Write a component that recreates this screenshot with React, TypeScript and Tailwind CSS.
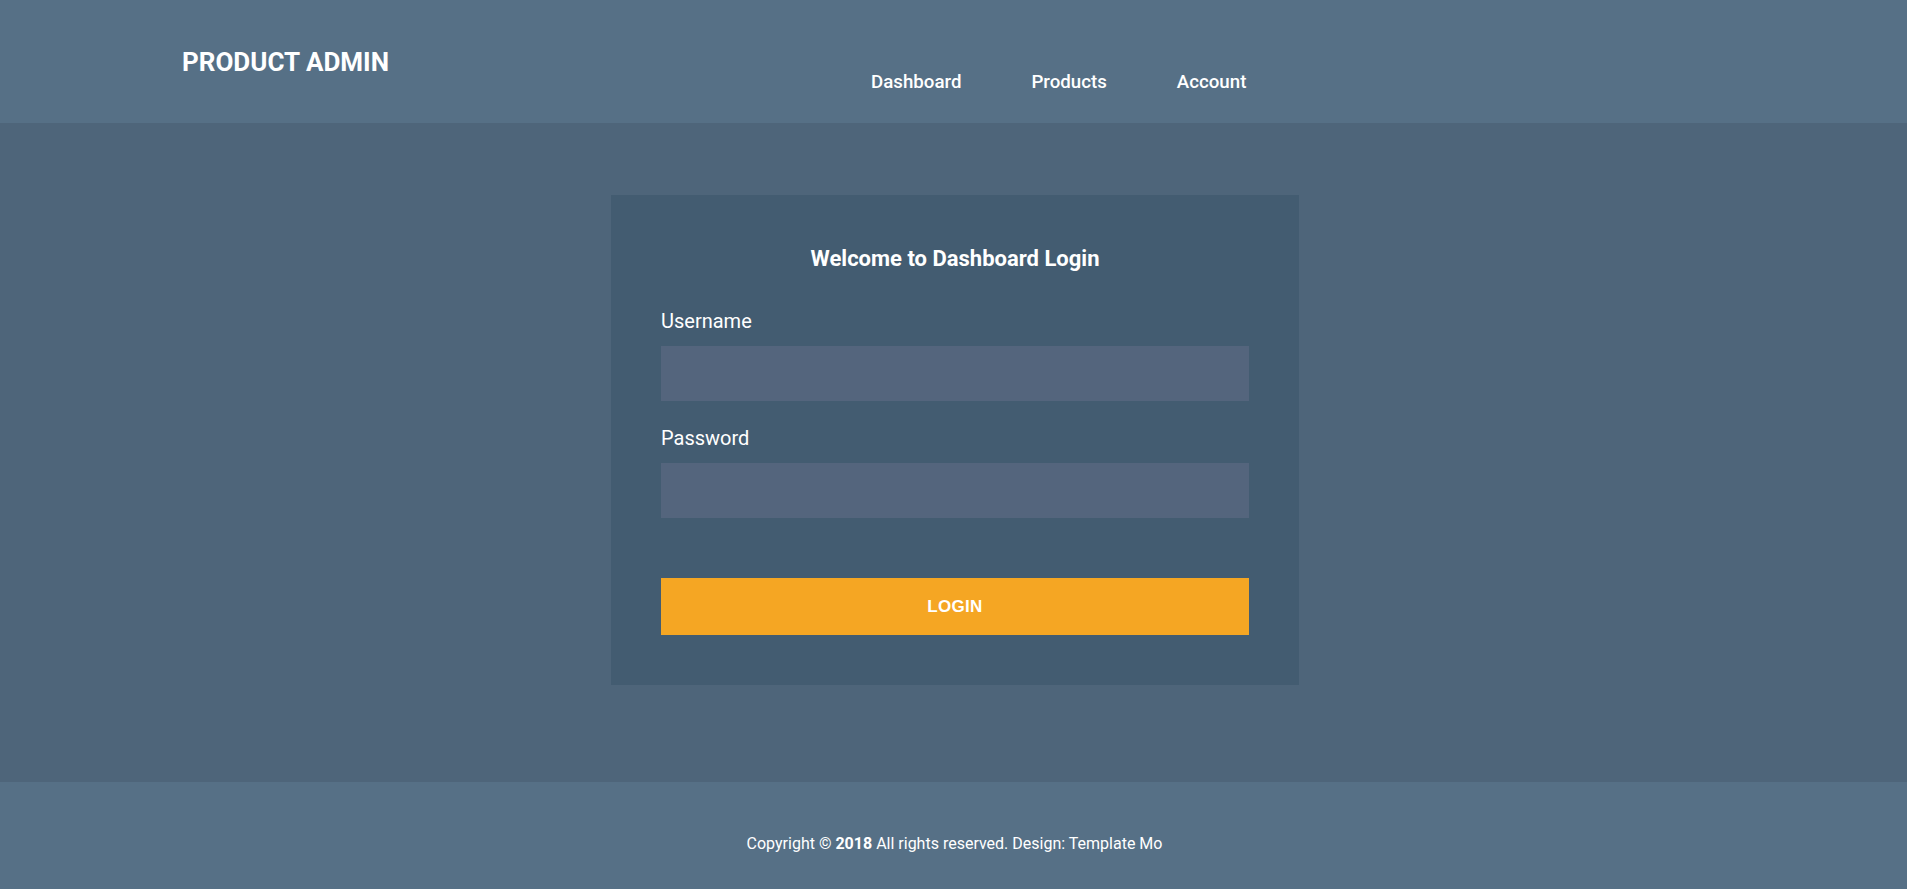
const NavItem = ({ label }: { label: string }) => {
  return <a href="#" className="px-[35px] text-[18.7px] leading-[27px] font-medium text-white">{label}</a>
}

const Field = ({ label, type }: { label: string; type: string }) => {
  return (
    <div className="flex flex-col">
      <label className="text-[20px] leading-[24px] text-white">{label}</label>
      <input type={type} className="mt-[13px] h-[55px] w-full bg-[#54657d] px-4 text-white outline-none" />
    </div>
  )
}

export default function App() {
  return (
    <div className="flex min-h-[889px] flex-col font-['Roboto',sans-serif]">
      <div className="flex h-[123px] items-start bg-[#567086]">
        <div className="w-[836px] shrink-0 pl-[182px] pt-[47px] text-[26px] leading-[30px] font-bold text-white">PRODUCT ADMIN</div>
        <nav className="flex pt-[69px]">
          <NavItem label="Dashboard" />
          <NavItem label="Products" />
          <NavItem label="Account" />
        </nav>
      </div>

      <div className="flex flex-1 justify-center bg-[#4e657a] pt-[72px] pb-[97px] pl-[3px]">
        <div className="w-[688px] self-start bg-[#435c71] px-[50px] pt-[51px] pb-[50px]">
          <h2 className="text-center text-[22px] leading-[26px] font-bold text-white">Welcome to Dashboard Login</h2>
          <div className="mt-[37px]">
            <Field label="Username" type="text" />
          </div>
          <div className="mt-[25px]">
            <Field label="Password" type="password" />
          </div>
          <button className="mt-[60px] h-[57px] w-full bg-[#f5a623] font-['Liberation_Sans',Arial,sans-serif] text-[17px] font-bold tracking-[0.3px] text-white">
            LOGIN
          </button>
        </div>
      </div>

      <div className="h-[107px] bg-[#567086] pt-[50px] pl-[2px] text-center text-[16px] leading-[24px] text-white">
        Copyright © <b>2018</b> All rights reserved. Design: Template Mo
      </div>
    </div>
  )
}
